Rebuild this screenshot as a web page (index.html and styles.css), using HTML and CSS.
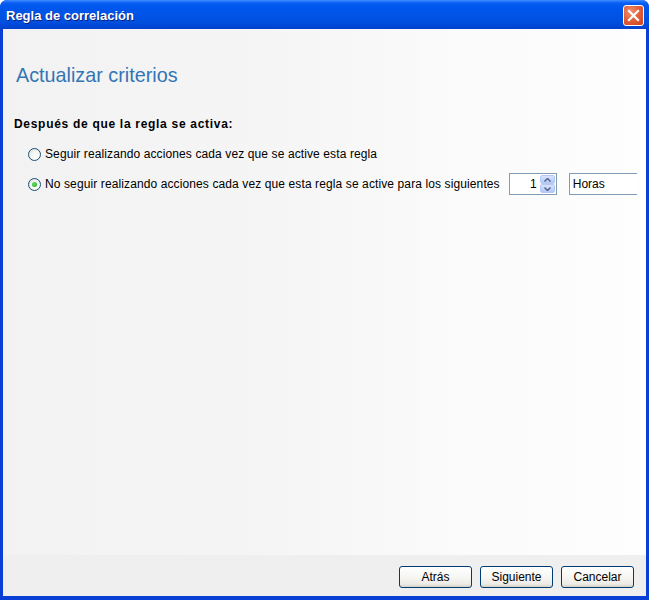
FILE: index.html
```html
<!DOCTYPE html>
<html lang="es">
<head>
<meta charset="utf-8">
<title>Regla de correlación</title>
<link rel="stylesheet" href="styles.css">
</head>
<body>
<div class="window">
  <div class="titlebar">
    <span class="title">Regla de correlación</span>
    <button class="close" aria-label="Cerrar">
      <svg width="13" height="13" viewBox="0 0 13 13"><path d="M2 2 L11 11 M11 2 L2 11" stroke="#fff" stroke-width="2.2" stroke-linecap="square"/></svg>
    </button>
  </div>
  <div class="frame">
    <div class="content">
      <h1 class="heading">Actualizar criterios</h1>
      <div class="section-label">Después de que la regla se activa:</div>
      <div class="options">
        <label class="option">
          <span class="radio"></span>
          <span class="opt-text">Seguir realizando acciones cada vez que se active esta regla</span>
        </label>
        <div class="option">
          <span class="radio checked"><span class="dot"></span></span>
          <span class="opt-text">No seguir realizando acciones cada vez que esta regla se active para los siguientes</span>
          <div class="spinner">
            <span class="spin-value">1</span>
            <span class="spin-btns">
              <span class="spin-btn up"><svg width="7" height="4" viewBox="0 0 7 4"><path d="M0.5 3.5 L3.5 0.5 L6.5 3.5" fill="none" stroke="#4d6185" stroke-width="1.4"/></svg></span>
              <span class="spin-btn down"><svg width="7" height="4" viewBox="0 0 7 4"><path d="M0.5 0.5 L3.5 3.5 L6.5 0.5" fill="none" stroke="#4d6185" stroke-width="1.4"/></svg></span>
            </span>
          </div>
          <div class="unit-clip"><div class="unit">Horas</div></div>
        </div>
      </div>
    </div>
    <div class="buttonbar">
      <button class="btn">Atrás</button>
      <button class="btn">Siguiente</button>
      <button class="btn">Cancelar</button>
    </div>
  </div>
</div>
</body>
</html>
```
FILE: styles.css
```css
* { box-sizing: border-box; }
html, body { margin: 0; padding: 0; }
body {
  width: 649px;
  height: 600px;
  overflow: hidden;
  font-family: "Liberation Sans", Arial, sans-serif;
  font-size: 12px;
  color: #000;
}
.window {
  width: 649px;
  height: 600px;
  display: flex;
  flex-direction: column;
  background: #0a3fd6;
  border-radius: 7px 7px 0 0;
  overflow: hidden;
}
.titlebar {
  height: 29px;
  flex: none;
  display: flex;
  align-items: center;
  justify-content: space-between;
  padding: 0 5px 0 6px;
  background: linear-gradient(to bottom, #3d8cff 0, #0a5ef3 3px, #0058ee 6px, #0054e6 14px, #0050df 22px, #0146d6 26px, #0342c9 29px);
}
.title {
  color: #fff;
  font-family: "Liberation Sans", Arial, sans-serif;
  font-weight: bold;
  font-size: 13px;
  text-shadow: 1px 1px 0 #0f1f7a;
  padding-top: 1px;
}
.close {
  width: 21px;
  height: 21px;
  padding: 0;
  margin-top: 2px;
  border: 1px solid #fff;
  border-radius: 3px;
  background: radial-gradient(circle at 35% 30%, #f0916f 0, #e2623d 45%, #cc3f1b 100%);
  display: flex;
  align-items: center;
  justify-content: center;
}
.frame {
  flex: 1;
  margin: 0 3px 4px 3px;
  display: flex;
  flex-direction: column;
  background: #efefef;
}
.content {
  height: 526px;
  flex: none;
  padding: 35px 0 0 11px;
  background: linear-gradient(to right, #f2f2f2 0%, #f5f5f5 40%, #fbfbfb 75%, #fefefe 100%);
  overflow: hidden;
}
.heading {
  margin: 0 0 0 2px;
  font-family: "Liberation Sans", Arial, sans-serif;
  font-weight: normal;
  font-size: 19.8px;
  color: #3375b4;
  line-height: 22px;
}
.section-label {
  margin-top: 31px;
  font-weight: bold;
  font-size: 12px;
  letter-spacing: 0.7px;
  line-height: 14px;
}
.options {
  margin-top: 12px;
  padding-left: 14px;
  display: flex;
  flex-direction: column;
  gap: 8px;
}
.option {
  display: flex;
  align-items: center;
  height: 22px;
}
.radio {
  width: 13px;
  height: 13px;
  border-radius: 50%;
  border: 1px solid #1c5180;
  background: radial-gradient(circle at 60% 65%, #ffffff 0, #f3f3ef 50%, #d6d6ce 100%);
  display: flex;
  align-items: center;
  justify-content: center;
  flex: none;
}
.dot {
  width: 5px;
  height: 5px;
  border-radius: 50%;
  background: radial-gradient(circle at 40% 40%, #5fe35f 0, #21a121 100%);
}
.opt-text {
  margin-left: 4px;
  letter-spacing: 0.11px;
  white-space: nowrap;
}
.spinner {
  margin-left: 9px;
  width: 48px;
  height: 22px;
  border: 1px solid #7f9db9;
  background: #fff;
  display: flex;
  align-items: stretch;
  flex: none;
}
.spin-value {
  flex: 1;
  text-align: right;
  padding-right: 3px;
  line-height: 20px;
}
.spin-btns {
  width: 16px;
  display: flex;
  flex-direction: column;
  padding: 1px 1px 1px 0;
}
.spin-btn {
  flex: 1;
  background: linear-gradient(to bottom, #d8e3fe, #b4c6f6);
  border: 1px solid #b7c9f3;
  border-radius: 2px;
  display: flex;
  align-items: center;
  justify-content: center;
}
.unit-clip {
  margin-left: 12px;
  width: 68px;
  height: 22px;
  overflow: hidden;
  flex: none;
}
.unit {
  width: 80px;
  height: 22px;
  border: 1px solid #7f9db9;
  background: #fff;
  padding-left: 3px;
  line-height: 20px;
}
.buttonbar {
  flex: 1;
  display: flex;
  justify-content: flex-end;
  gap: 8px;
  padding: 11px 12px 0 0;
}
.btn {
  width: 73px;
  height: 22px;
  font-family: "Liberation Sans", Arial, sans-serif;
  font-size: 12px;
  color: #000;
  border: 1px solid #003c74;
  border-radius: 3px;
  background: linear-gradient(to bottom, #ffffff 0%, #f6f6f3 50%, #ecebe5 85%, #d6d0c5 100%);
  padding: 0;
}
```
